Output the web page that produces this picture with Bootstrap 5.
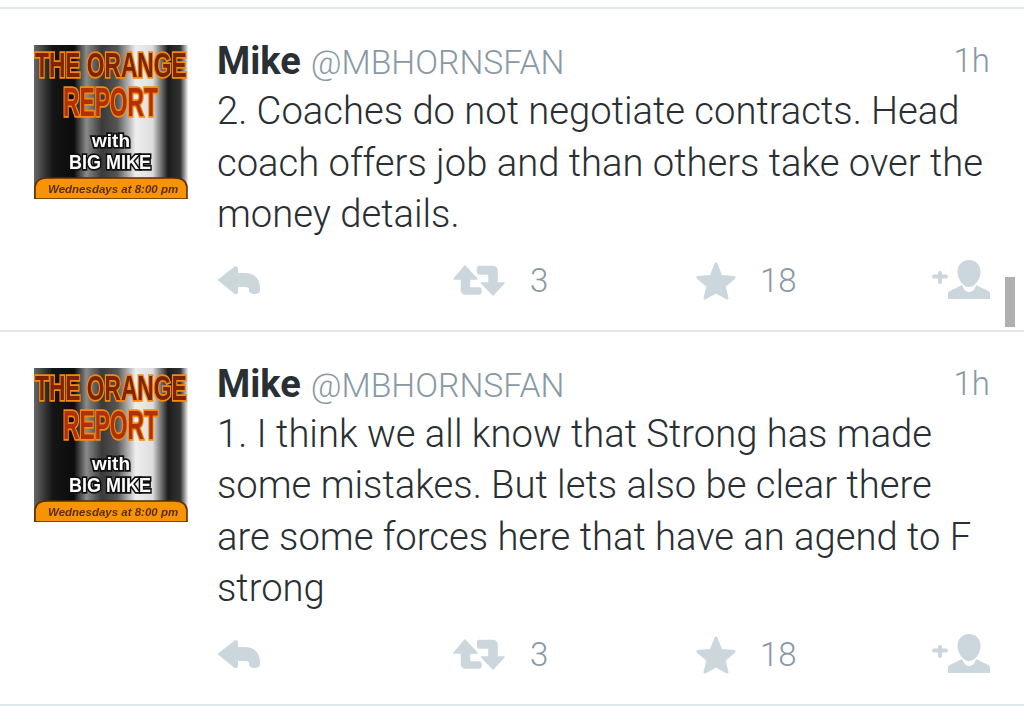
<!DOCTYPE html>
<html lang="en">
<head>
  <meta charset="UTF-8" />
  <meta name="viewport" content="width=device-width, initial-scale=1.0"/>
  <title>Tweets</title>
  <link href="https://cdn.jsdelivr.net/npm/bootstrap@5.3.3/dist/css/bootstrap.min.css" rel="stylesheet" />
  <style>
    html, body { height: 100%; overflow: hidden; }
    body { background: #fff; font-family: Roboto, "Liberation Sans", sans-serif; color: #292f33; }
    .tweet-list { border-top: 2px solid #e1e8ed; margin-top: 7px; }
    .tweet-item { border-bottom: 2px solid #e1e8ed; padding: 36px 34px 9px 34px; }
    .tweet-avatar { width: 154px; height: 154px; flex: none; margin-right: 29px; filter: blur(.4px); }
    .tweet-head { height: 41px; line-height: 32px; }
    .tweet-name { font-size: 38px; font-weight: 700; }
    .tweet-handle { font-size: 33.7px; font-weight: 300; color: #8899a6; margin-left: 6px; }
    .tweet-time { font-size: 33px; font-weight: 300; color: #8899a6; line-height: 31px; }
    .tweet-text { font-size: 38.2px; font-weight: 300; line-height: 51.5px; margin: 0; }
    .tweet-actions { height: 80px; color: #8899a6; font-size: 33px; font-weight: 300; }
    .act-reply { width: 236px; }
    .act-rt { width: 243px; }
    .act-rt svg { margin-right: 25px; }
    .act-fav svg { margin-right: 24px; }
    .act-follow { margin-bottom: 3px; }
    .act-icon { fill: #ccd6dd; stroke: #ccd6dd; display: block; }
    .scroll-thumb { position: absolute; left: 1005px; top: 277px; width: 10px; height: 50px; background: #b0b0b0; }
  </style>
</head>
<body class="position-relative">
  <svg width="0" height="0" class="position-absolute">
    <defs>
      <linearGradient id="stripes">
        <stop offset="0" stop-color="#666"/>
        <stop offset=".12" stop-color="#151515"/>
        <stop offset=".26" stop-color="#0c0c0c"/>
        <stop offset=".34" stop-color="#8a8a8a"/>
        <stop offset=".44" stop-color="#3a3a3a"/>
        <stop offset=".54" stop-color="#555"/>
        <stop offset=".66" stop-color="#eee"/>
        <stop offset=".77" stop-color="#ddd"/>
        <stop offset=".87" stop-color="#1c1c1c"/>
        <stop offset=".95" stop-color="#333"/>
        <stop offset="1" stop-color="#f0f0f0"/>
      </linearGradient>
      <symbol id="ic-reply" viewBox="0 0 44 31">
        <path d="M2 15 L18 2.500 Q20 1.500 20 4 V9 H27 Q42 9 42 24 V25 Q42 28 37.500 28 Q33 28 33 25 V24 Q33 21 28 21 H20 V26 Q20 29 18 28 Z" stroke-width="2" stroke-linejoin="round"/>
      </symbol>
      <symbol id="ic-rt" viewBox="0 0 52 31">
        <path d="M12 1 L24 14 H16.500 V22 Q16.500 23 18 23 H26 Q28 23 28 26 Q28 29 26 29 H13 Q8.500 29 8.500 25 V14 H1 Z" stroke-width="1.500" stroke-linejoin="round"/>
        <path d="M40 30 L28.500 18 H36 V10 Q36 9 34.500 9 H26 Q24.500 9 24.500 5 Q24.500 1.500 26 1.500 H39 Q44 1.500 44 6 V18 H51 Z" stroke-width="1.500" stroke-linejoin="round"/>
      </symbol>
      <symbol id="ic-star" viewBox="0 0 40 38">
        <path d="M20 2 L25 14.500 L38 15.500 L28 24 L31 36 L20 30 L9 36 L12 24 L2 15.500 L15 14.500 Z" stroke-width="3" stroke-linejoin="round"/>
      </symbol>
      <symbol id="ic-follow" viewBox="0 0 58 39">
        <path d="M6 13 Q6 11 8 11 Q10 11 10 13 V14.500 H14 Q16 14.500 16 16.500 Q16 18.500 14 18.500 H10 V22 Q10 24 8 24 Q6 24 6 22 V18.500 H2 Q0 18.500 0 16.500 Q0 14.500 2 14.500 H6 Z" stroke="none"/>
        <path d="M37 0 C44 0 48.500 5 48.500 12 C48.500 19 43 27 37 27 C31 27 25.500 19 25.500 12 C25.500 5 30 0 37 0 Z" stroke="none"/>
        <path d="M16 39 V34 C16 31 20 30 24 28 L30 25 C32 30 34 32 37 32 C40 32 43 30 44 25 L50 28 C54 30 58 31 58 34 V39 Z" stroke="none"/>
      </symbol>
    </defs>
  </svg>

  <div class="tweet-list">
    <!-- primeiro tweet -->
    <div class="tweet-item d-flex">
      <svg class="tweet-avatar" viewBox="0 0 154 154" font-family="'Liberation Sans', sans-serif" font-weight="700">
        <rect width="154" height="154" fill="url(#stripes)"/>
        <text transform="translate(1 32) scale(.65 1)" font-size="35" fill="#7c2404" stroke="#f58a0a" stroke-width="3.500" paint-order="stroke">THE ORANGE</text>
        <text transform="translate(29 71) scale(.57 1)" font-size="40" fill="#b03008" stroke="#f58a0a" stroke-width="3.500" paint-order="stroke">REPORT</text>
        <text x="58" y="102" font-size="19" fill="#fff" stroke="#111" stroke-width="3.500" paint-order="stroke">with</text>
        <text transform="translate(35 124) scale(.857 1)" font-size="21" fill="#fff" stroke="#111" stroke-width="3.500" paint-order="stroke">BIG MIKE</text>
        <path d="M1 154 V142 Q2 133 13 133 H140 Q152 133 153 142 V154 Z" fill="#f79406" stroke="#5a2a05" stroke-width="1.500"/>
        <text x="14" y="148" font-size="11.500" font-style="italic" fill="#5c2c08">Wednesdays at 8:00 pm</text>
      </svg>
      <div class="flex-grow-1">
        <div class="tweet-head d-flex justify-content-between">
          <div><span class="tweet-name">Mike</span> <span class="tweet-handle">@MBHORNSFAN</span></div>
          <span class="tweet-time">1h</span>
        </div>
        <p class="tweet-text">2. Coaches do not negotiate contracts. Head coach offers job and than others take over the money details.</p>
        <div class="tweet-actions d-flex align-items-center">
          <div class="act-reply"><svg class="act-icon" width="44" height="31"><use href="#ic-reply"/></svg></div>
          <div class="act-rt d-flex align-items-center"><svg class="act-icon" width="52" height="31"><use href="#ic-rt"/></svg>3</div>
          <div class="act-fav d-flex align-items-center"><svg class="act-icon" width="40" height="38"><use href="#ic-star"/></svg>18</div>
          <div class="act-follow ms-auto"><svg class="act-icon" width="58" height="39"><use href="#ic-follow"/></svg></div>
        </div>
      </div>
    </div>

    <!-- segundo tweet -->
    <div class="tweet-item d-flex">
      <svg class="tweet-avatar" viewBox="0 0 154 154" font-family="'Liberation Sans', sans-serif" font-weight="700">
        <rect width="154" height="154" fill="url(#stripes)"/>
        <text transform="translate(1 32) scale(.65 1)" font-size="35" fill="#7c2404" stroke="#f58a0a" stroke-width="3.500" paint-order="stroke">THE ORANGE</text>
        <text transform="translate(29 71) scale(.57 1)" font-size="40" fill="#b03008" stroke="#f58a0a" stroke-width="3.500" paint-order="stroke">REPORT</text>
        <text x="58" y="102" font-size="19" fill="#fff" stroke="#111" stroke-width="3.500" paint-order="stroke">with</text>
        <text transform="translate(35 124) scale(.857 1)" font-size="21" fill="#fff" stroke="#111" stroke-width="3.500" paint-order="stroke">BIG MIKE</text>
        <path d="M1 154 V142 Q2 133 13 133 H140 Q152 133 153 142 V154 Z" fill="#f79406" stroke="#5a2a05" stroke-width="1.500"/>
        <text x="14" y="148" font-size="11.500" font-style="italic" fill="#5c2c08">Wednesdays at 8:00 pm</text>
      </svg>
      <div class="flex-grow-1">
        <div class="tweet-head d-flex justify-content-between">
          <div><span class="tweet-name">Mike</span> <span class="tweet-handle">@MBHORNSFAN</span></div>
          <span class="tweet-time">1h</span>
        </div>
        <p class="tweet-text">1. I think we all know that Strong has made some mistakes. But lets also be clear there are some forces here that have an agend to F strong</p>
        <div class="tweet-actions d-flex align-items-center">
          <div class="act-reply"><svg class="act-icon" width="44" height="31"><use href="#ic-reply"/></svg></div>
          <div class="act-rt d-flex align-items-center"><svg class="act-icon" width="52" height="31"><use href="#ic-rt"/></svg>3</div>
          <div class="act-fav d-flex align-items-center"><svg class="act-icon" width="40" height="38"><use href="#ic-star"/></svg>18</div>
          <div class="act-follow ms-auto"><svg class="act-icon" width="58" height="39"><use href="#ic-follow"/></svg></div>
        </div>
      </div>
    </div>
  </div>
  <div class="scroll-thumb"></div>
  <script src="https://cdn.jsdelivr.net/npm/bootstrap@5.3.3/dist/js/bootstrap.bundle.min.js"></script>
</body>
</html>
